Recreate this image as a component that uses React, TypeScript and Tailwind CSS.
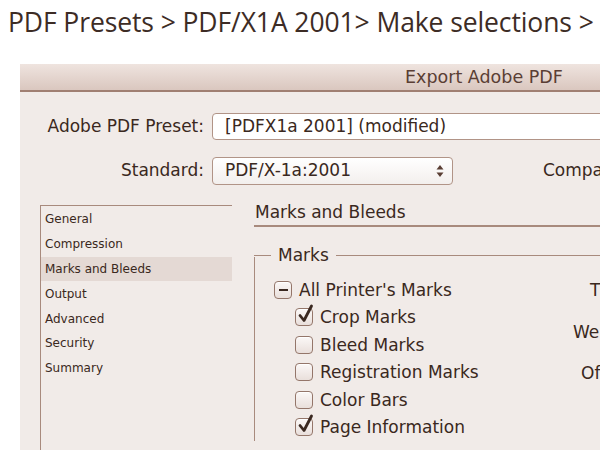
import React from 'react'

const ink = 'text-[#3a2820]'

function Check({ state }: { state: 'on' | 'off' | 'mixed' }) {
  return (
    <span className="relative inline-flex h-[18px] w-[18px] shrink-0 items-center justify-center rounded-[4px] border border-[#94766a] bg-gradient-to-b from-[#fbf8f7] to-[#e9dfdb] shadow-[inset_0_1px_0_#ffffff]">
      {state === 'mixed' && <span className="h-[2px] w-[9px] bg-[#3a2820]" />}
      {state === 'on' && (
        <svg className="absolute -top-[5px] left-[1px]" width="18" height="20" viewBox="0 0 18 20">
          <path d="M3 11.5 L7 16.5 L14.5 2" fill="none" stroke="#3a2820" strokeWidth="2.8" strokeLinecap="round" strokeLinejoin="round" />
        </svg>
      )}
    </span>
  )
}

function Row({ label, state, indent }: { label: string; state: 'on' | 'off' | 'mixed'; indent?: boolean }) {
  return (
    <div className={`flex h-[27.5px] items-center gap-[7px] ${indent ? 'pl-[40px]' : 'pl-[19px]'}`}>
      <Check state={state} />
      <span className={`text-[17px] leading-[22px] ${ink}`}>{label}</span>
    </div>
  )
}

export default function App() {
  const sections = ['General', 'Compression', 'Marks and Bleeds', 'Output', 'Advanced', 'Security', 'Summary']
  return (
    <div className="h-[450px] w-[600px] overflow-hidden bg-white" style={{ fontFamily: '"DejaVu Sans", sans-serif' }}>
      <div className="h-[64px] pl-[8px] pt-[5px]">
        <p className="whitespace-nowrap text-[26.5px] leading-[34px] text-[#3d2c25]" style={{ fontFamily: '"Open Sans", sans-serif', letterSpacing: '-0.1px' }}>
          PDF Presets &gt; PDF/X1A 2001&gt; Make selections &gt;
        </p>
      </div>

      <div className="ml-[20px] h-[386px] w-[720px] bg-[#f1ebe8]">
        <div className="flex h-[28px] items-center border-b-2 border-[#a07f72] bg-gradient-to-b from-[#efe4df] to-[#dac7bf] pl-[385px]">
          <span className="text-[17.5px] text-[#5a3e34]">Export Adobe PDF</span>
        </div>

        <div className="pt-[21px]">
          <div className="flex items-center gap-[8px]">
            <span className={`w-[184px] text-right text-[17px] ${ink}`}>Adobe PDF Preset:</span>
            <div className="flex h-[27px] flex-1 items-center rounded-l-[4px] border border-[#b19487] bg-white pl-[12px]">
              <span className={`text-[17px] ${ink}`}>[PDFX1a 2001] (modified)</span>
            </div>
          </div>

          <div className="mt-[17px] flex items-center gap-[8px]">
            <span className={`w-[184px] text-right text-[17px] ${ink}`}>Standard:</span>
            <div className="flex h-[28px] w-[241px] items-center justify-between rounded-[4px] border border-[#b19487] bg-gradient-to-b from-white to-[#f3efed] pl-[12px] pr-[8px]">
              <span className={`text-[17px] ${ink}`}>PDF/X-1a:2001</span>
              <svg width="8" height="14" viewBox="0 0 8 14">
                <path d="M4 1 L7.5 5.5 H0.5 Z M4 13 L7.5 8.5 H0.5 Z" fill="#5a3e34" />
              </svg>
            </div>
            <span className={`ml-[82px] text-[17px] ${ink}`}>Compa</span>
          </div>

          <div className="mt-[20px] flex">
            <div className="ml-[20px] h-[250px] w-[192px] border-l border-t border-[#a88a7d] pt-[1px]">
              {sections.map((s) => (
                <div
                  key={s}
                  className={`flex h-[24.8px] items-center pl-[4px] text-[12px] ${ink} ${s === 'Marks and Bleeds' ? 'bg-[#e4d9d4]' : ''}`}
                >
                  {s}
                </div>
              ))}
            </div>

            <div className="ml-[22px] flex-1">
              <div className="-mt-[4px] border-b-2 border-[#a88a7d] pl-[1px]">
                <span className={`text-[17px] leading-[22px] ${ink}`}>Marks and Bleeds</span>
              </div>

              <div className="mt-[17px] flex items-center">
                <span className="h-px w-[17px] bg-[#a88a7d]" />
                <span className={`px-[7px] text-[17px] leading-[22px] ${ink}`}>Marks</span>
                <span className="h-px flex-1 bg-[#a88a7d]" />
              </div>

              <div className="-mt-[9px] flex border-l border-[#a88a7d] pt-[19px]">
                <div className="w-[290px]">
                  <Row label="All Printer's Marks" state="mixed" />
                  <Row label="Crop Marks" state="on" indent />
                  <Row label="Bleed Marks" state="off" indent />
                  <Row label="Registration Marks" state="off" indent />
                  <Row label="Color Bars" state="off" indent />
                  <Row label="Page Information" state="on" indent />
                </div>
                <div className={`flex flex-col items-start text-[17px] ${ink}`}>
                  <span className="ml-[45px] mt-[4px] leading-[20px]">T</span>
                  <span className="ml-[28px] mt-[22px] leading-[20px]">We</span>
                  <span className="ml-[36px] mt-[21px] leading-[20px]">Of</span>
                </div>
              </div>
            </div>
          </div>
        </div>
      </div>
    </div>
  )
}
